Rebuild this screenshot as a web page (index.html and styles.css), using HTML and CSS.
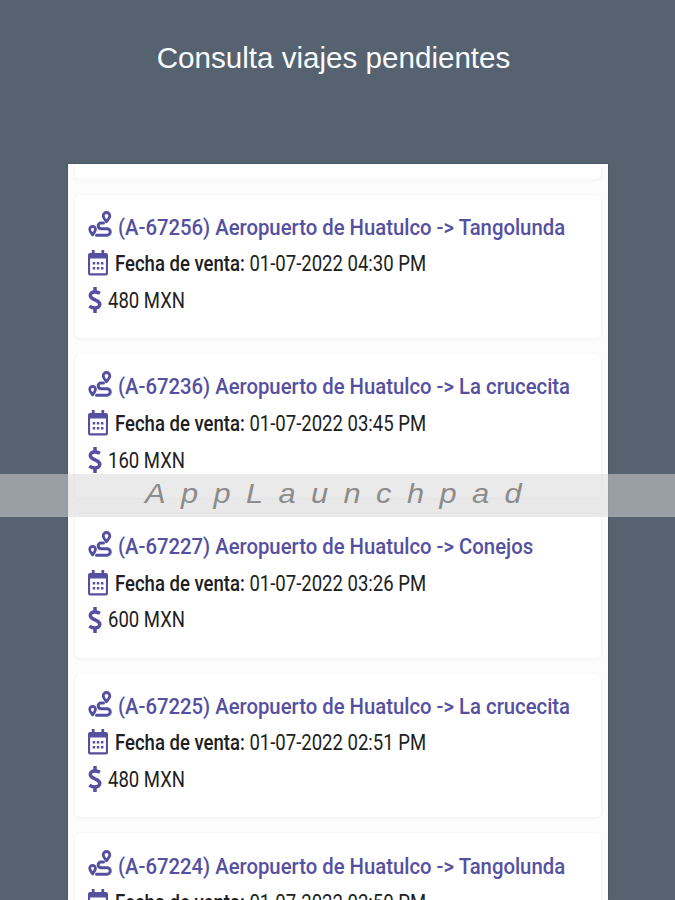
FILE: index.html
```html
<!DOCTYPE html>
<html lang="es">
<head>
	<meta charset="utf-8">
	<title>Consulta viajes pendientes</title>
	<link rel="stylesheet" href="styles.css">
</head>

<body>
	<svg class="icon_defs">
		<symbol id="icon_route" viewBox="0 0 24 26">
			<g fill="none" stroke="currentColor" stroke-width="2.8" stroke-linejoin="round" stroke-linecap="round">
				<path d="M18.500 1.500a3.300 3.300 0 0 1 3.300 3.300c0 1.900-2 4.200-3.300 6c-1.300-1.800-3.300-4.100-3.300-6a3.300 3.300 0 0 1 3.300-3.300z"/>
				<path d="M4.600 15.300a2.900 2.900 0 0 1 2.900 2.900c0 1.900-1.700 3.900-2.900 5.700c-1.200-1.800-2.900-3.800-2.900-5.700a2.900 2.900 0 0 1 2.900-2.900z"/>
				<path stroke-width="3" d="M15.500 12h-2.500a2.600 2.600 0 0 0 0 5.700h6a3.200 3.200 0 0 1 0 6.500h-10.500"/>
			</g>
		</symbol>
		<symbol id="icon_calendar" viewBox="0 0 20 26">
			<path fill="currentColor" fill-rule="evenodd" d="M3.800 0h2.800v3h6.800v-3h2.800v3h1.800a2 2 0 0 1 2 2v18.500a2 2 0 0 1-2 2h-16a2 2 0 0 1-2-2v-18.500a2 2 0 0 1 2-2h1.800zM2.100 8.500v14.700h15.800v-14.700z"/>
			<path fill="currentColor" d="M4.700 12h2.500v2.600h-2.500zM8.800 12h2.500v2.600h-2.500zM12.900 12h2.500v2.600h-2.500zM4.700 17h2.500v2.600h-2.500zM8.800 17h2.500v2.600h-2.500zM12.900 17h2.500v2.600h-2.500z"/>
		</symbol>
		<symbol id="icon_dollar" viewBox="0 0 14 26">
			<path fill="none" stroke="currentColor" stroke-width="3.500" d="M7 0v5M7 21v5M12 6.300c-2-1-3.500-1.300-5.500-1.300c-2.800 0-4.200 1.500-4.200 3.500c0 5 9.500 3.600 9.500 8.800c0 2.200-1.800 3.700-4.500 3.700c-2.300 0-4-.6-6-1.800"/>
		</symbol>
	</svg>

	<h1 class="page_title">Consulta viajes pendientes</h1>

	<div class="screen">
		<div class="card card_previous"></div>
		<div class="card">
			<div class="row trip"><svg class="icon_route"><use href="#icon_route"/></svg><span class="text">(A-67256) Aeropuerto de Huatulco -&gt; Tangolunda</span></div>
			<div class="row"><svg class="icon_calendar"><use href="#icon_calendar"/></svg><span class="text"><b>Fecha de venta:</b> 01-07-2022 04:30 PM</span></div>
			<div class="row"><svg class="icon_dollar"><use href="#icon_dollar"/></svg><span class="text">480 MXN</span></div>
		</div>
		<div class="card">
			<div class="row trip"><svg class="icon_route"><use href="#icon_route"/></svg><span class="text">(A-67236) Aeropuerto de Huatulco -&gt; La crucecita</span></div>
			<div class="row"><svg class="icon_calendar"><use href="#icon_calendar"/></svg><span class="text"><b>Fecha de venta:</b> 01-07-2022 03:45 PM</span></div>
			<div class="row"><svg class="icon_dollar"><use href="#icon_dollar"/></svg><span class="text">160 MXN</span></div>
		</div>
		<div class="card">
			<div class="row trip"><svg class="icon_route"><use href="#icon_route"/></svg><span class="text">(A-67227) Aeropuerto de Huatulco -&gt; Conejos</span></div>
			<div class="row"><svg class="icon_calendar"><use href="#icon_calendar"/></svg><span class="text"><b>Fecha de venta:</b> 01-07-2022 03:26 PM</span></div>
			<div class="row"><svg class="icon_dollar"><use href="#icon_dollar"/></svg><span class="text">600 MXN</span></div>
		</div>
		<div class="card">
			<div class="row trip"><svg class="icon_route"><use href="#icon_route"/></svg><span class="text">(A-67225) Aeropuerto de Huatulco -&gt; La crucecita</span></div>
			<div class="row"><svg class="icon_calendar"><use href="#icon_calendar"/></svg><span class="text"><b>Fecha de venta:</b> 01-07-2022 02:51 PM</span></div>
			<div class="row"><svg class="icon_dollar"><use href="#icon_dollar"/></svg><span class="text">480 MXN</span></div>
		</div>
		<div class="card">
			<div class="row trip"><svg class="icon_route"><use href="#icon_route"/></svg><span class="text">(A-67224) Aeropuerto de Huatulco -&gt; Tangolunda</span></div>
			<div class="row"><svg class="icon_calendar"><use href="#icon_calendar"/></svg><span class="text"><b>Fecha de venta:</b> 01-07-2022 02:50 PM</span></div>
		</div>
	</div>

	<div class="watermark"><span class="watermark_text">AppLaunchpad</span></div>
</body>
</html>
```

FILE: styles.css
```css
* {
	box-sizing: border-box;
}

body {
	position: relative;
	display: flex;
	flex-direction: column;
	height: 900px;
	margin: 0;
	overflow: hidden;
	background-color: #566270;
	font-family: Roboto, sans-serif;
}

.icon_defs {
	display: none;
}

.page_title {
	height: 164px;
	flex: none;
	margin: 0;
	padding: 40px 8px 0 0;
	color: #FAFDFF;
	font: 29.600px/36px "Liberation Sans", sans-serif;
	text-align: center;
}

.screen {
	display: flex;
	flex: 1;
	flex-direction: column;
	gap: 16px;
	width: 540px;
	min-height: 0;
	margin-left: 68px;
	padding: 0 7px;
	overflow: hidden;
	background-color: #FCFCFC;
	box-shadow: 0 0 2px #35465A;
}

.card {
	flex: none;
	height: 143.700px;
	padding: 14.500px 0 0 13px;
	border-radius: 5px;
	background-color: #FFFFFF;
	box-shadow: 0 0 3px rgba(0, 0, 0, 0.05), 0 2px 5px rgba(0, 0, 0, 0.02);
}

.card_previous {
	height: 13.500px;
	border-radius: 0 0 5px 5px;
}

.row {
	display: flex;
	align-items: center;
	height: 36.900px;
	color: #202020;
	font-size: 22px;
	white-space: nowrap;
}

.row b {
	font-weight: 500;
}

.row svg {
	flex: none;
	height: 26px;
	margin-bottom: 2px;
	color: #554F9F;
}

.text {
	margin-bottom: 1.400px;
	transform: scaleX(0.842);
	transform-origin: left;
}

.trip {
	color: #5550A0;
	font-size: 22.500px;
	font-weight: 500;
}

.trip .text {
	transform: scaleX(0.902);
}

.row .icon_route {
	width: 24px;
	margin: 0 6px 6px 0;
}

.row .icon_calendar {
	width: 20px;
	margin-right: 7px;
}

.row .icon_dollar {
	width: 14px;
	margin-right: 6px;
}

.watermark {
	position: absolute;
	top: 474px;
	left: 0;
	width: 675px;
	height: 43px;
	padding: 0 0 0 145px;
	background-color: rgba(216, 214, 214, 0.520);
}

.watermark_text {
	display: inline-block;
	color: #8C8C8C;
	font: italic 28px/40px "Liberation Sans", sans-serif;
	letter-spacing: 14px;
	transform: scaleX(1.100);
	transform-origin: left;
}
```
